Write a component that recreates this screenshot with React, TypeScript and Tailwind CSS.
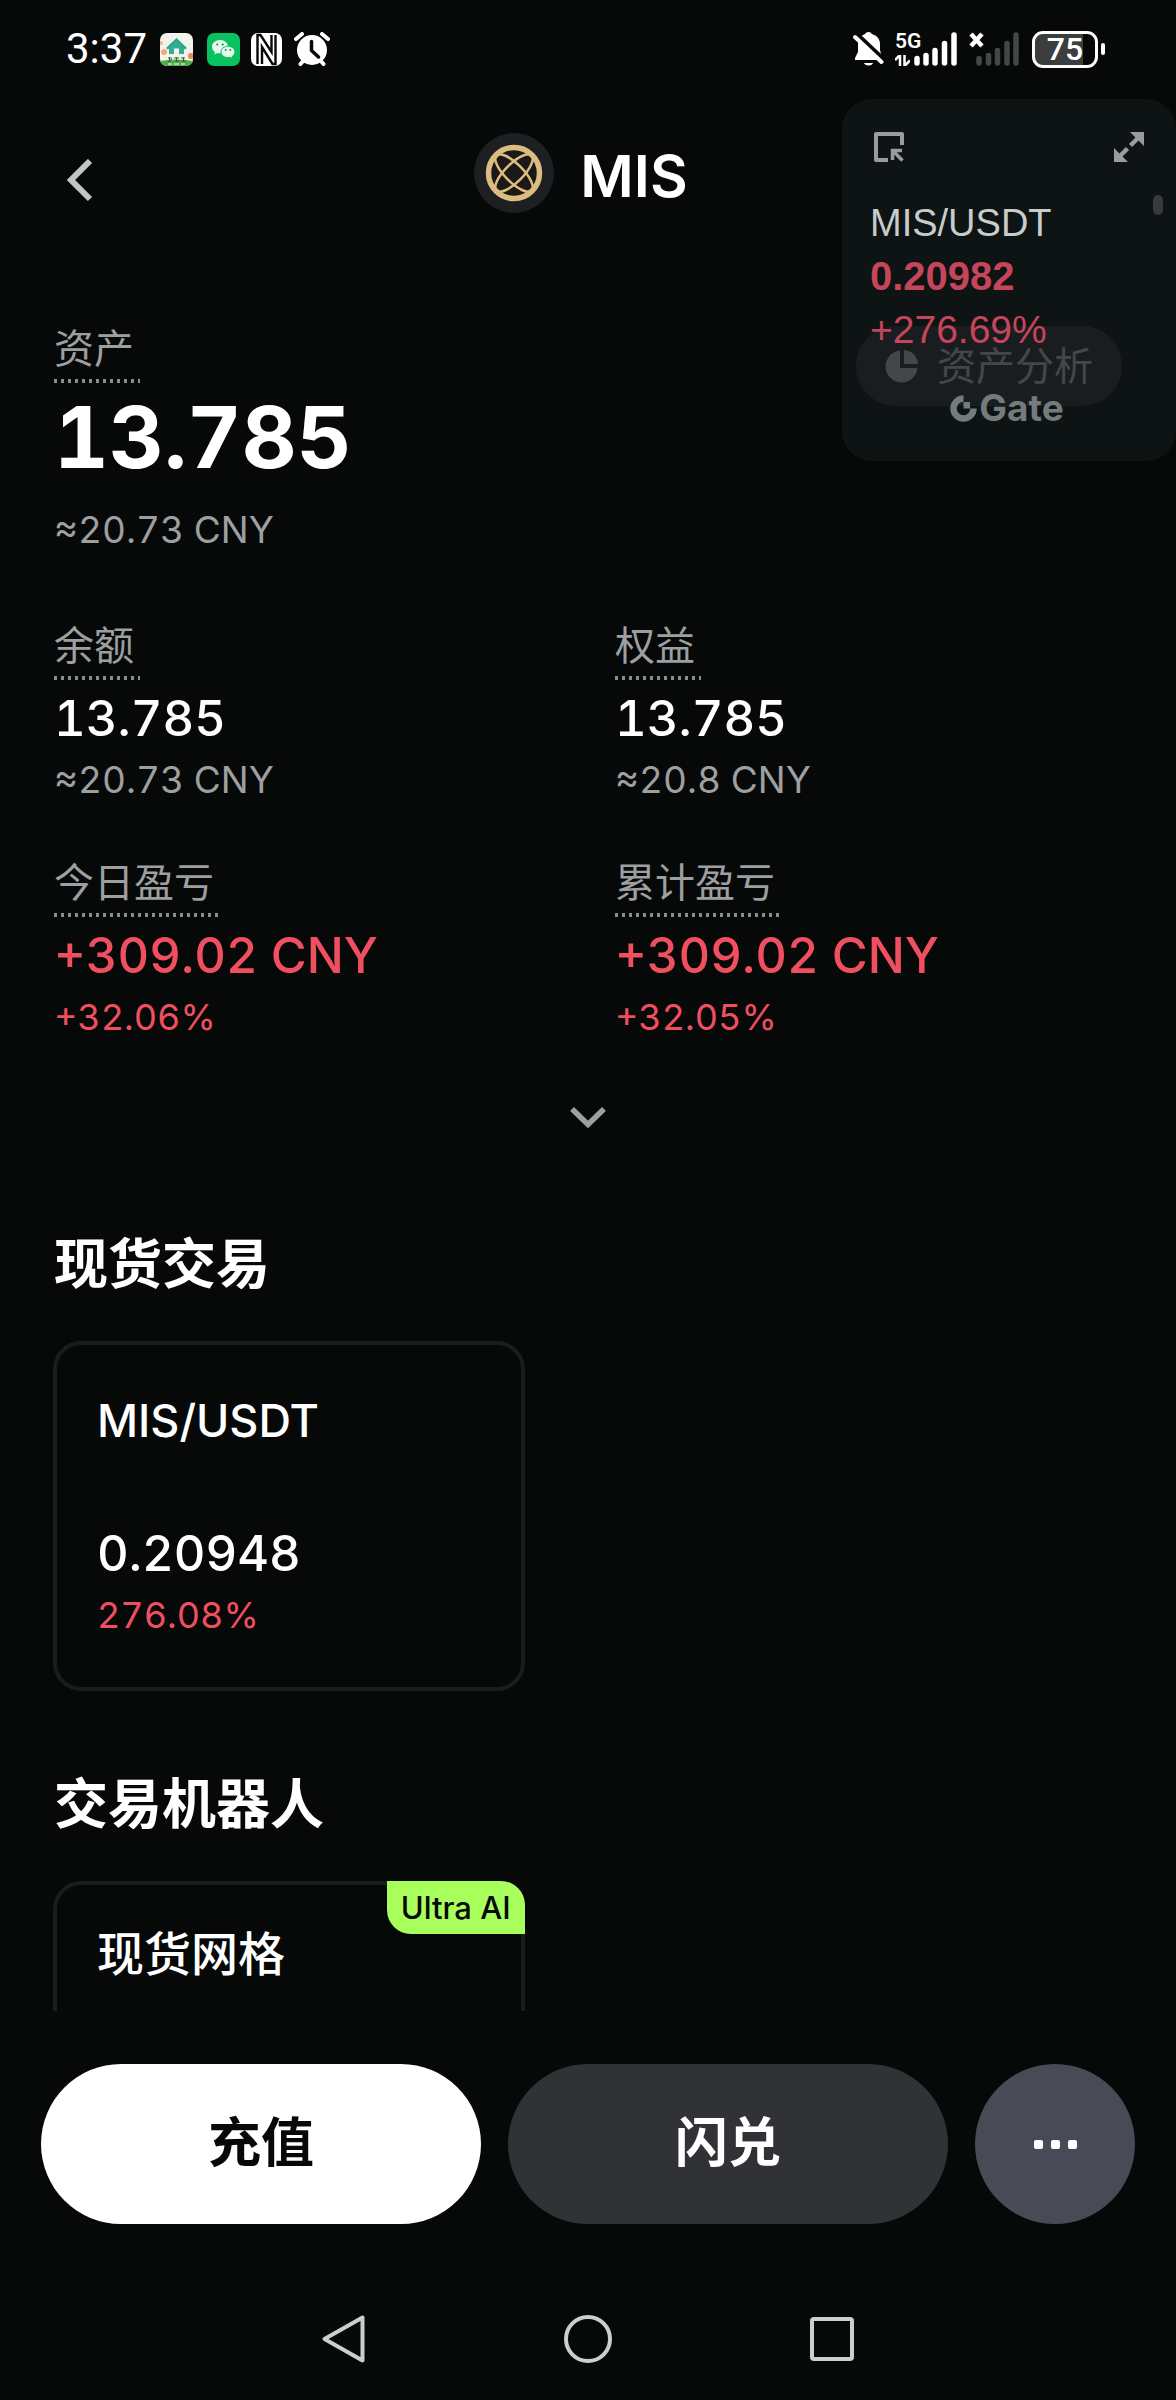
import React from "react";

const RED = "text-[#f04f60]";

function StatusBar() {
  return (
    <div className="flex h-[98px] shrink-0 items-center justify-between pl-[66px] pr-[71px] font-['Roboto',sans-serif] text-white">
      <div className="flex items-center">
        <span className="text-[42px] leading-[50px]">3:37</span>
        <svg className="ml-[13px] h-[33px] w-[33px]" viewBox="0 0 33 33" aria-hidden="true">
          <defs>
            <clipPath id="home-clip">
              <rect width="33" height="33" rx="7" />
            </clipPath>
          </defs>
          <g clipPath="url(#home-clip)">
            <rect width="33" height="33" fill="#f2f4ec" />
            <circle cx="4" cy="19" r="3" fill="#f3a878" />
            <circle cx="1" cy="10" r="2" fill="#f6b48a" />
            <circle cx="31" cy="23" r="3" fill="#f08a4b" />
            <path d="M0 28Q16 25 33 28V33H0Z" fill="#4fae4a" />
            <path d="M6 15L16.500 5L27 15L25 16.500L16.500 9L8 16.500Z" fill="#2ba58a" />
            <path d="M9 15L16.500 8L24 15V21H19V15.500H14V21H9Z" fill="#35ab92" />
            <path d="M8 25h4M9.500 24v5M8 29l4-3M14 25h5M15 28h4M16.500 24v5M21 25h4M22 28h4M23.500 24v5" stroke="#2f6b3c" strokeWidth="1" fill="none" />
            <path d="M8 31h4M14 31h5M21 31h4" stroke="#fff" strokeWidth="1" />
          </g>
        </svg>
        <svg className="ml-[14px] h-[33px] w-[33px]" viewBox="0 0 33 33" aria-hidden="true">
          <rect width="33" height="33" rx="7" fill="#07c25f" />
          <path d="M13 7C8.500 7 5 10 5 13.700c0 2.100 1.100 3.900 2.900 5.200L7.300 21.500l3-1.600c.9.200 1.800.4 2.700.4 4.500 0 8-2.900 8-6.600S17.500 7 13 7Z" fill="#e9f7ec" />
          <path d="M21 13.200c-3.900 0-7 2.500-7 5.700s3.100 5.700 7 5.700c.8 0 1.600-.1 2.300-.3l2.500 1.300-.6-2.200c1.700-1.100 2.700-2.700 2.700-4.500 0-3.200-3.100-5.700-6.900-5.700Z" fill="#e9f7ec" stroke="#07c25f" strokeWidth="1" />
          <g fill="#07a04f">
            <circle cx="10.300" cy="11.500" r="1.100" />
            <circle cx="15.800" cy="11.500" r="1.100" />
            <circle cx="18.700" cy="17" r="1" />
            <circle cx="23.300" cy="17" r="1" />
          </g>
        </svg>
        <svg className="ml-[11px] h-[33px] w-[31px]" viewBox="0 0 31 33" aria-hidden="true">
          <rect width="31" height="33" rx="7" fill="#fff" />
          <g fill="none" stroke="#060908" strokeWidth="2.400">
            <path d="M6.500 31V2H9.500L20.500 19V2" />
            <path d="M24.500 2V31H21.500L11 14V31" />
          </g>
        </svg>
        <svg className="ml-[12px] h-[34px] w-[36px]" viewBox="0 0 36 34" aria-hidden="true">
          <circle cx="18" cy="18" r="15" fill="#fff" />
          <path d="M2 7L8 2M34 7L28 2M6.500 32L10 28M29.500 32L26 28" stroke="#fff" strokeWidth="4" strokeLinecap="round" />
          <path d="M17.500 9.500V18.500L24.500 25" fill="none" stroke="#060908" strokeWidth="3.500" strokeLinecap="round" />
        </svg>
      </div>
      <div className="flex items-center">
        <svg className="h-[34px] w-[31px]" viewBox="0 0 31 34" aria-hidden="true">
          <path d="M15.500 0a4 4 0 0 1 3.500 2c5 1.500 8 5 8 10v6l2 8v2H2v-2l3-6v-8C5 7 8 3.500 12 2a4 4 0 0 1 3.500-2Z" fill="#fff" />
          <path d="M11 31h9a4.600 3 0 0 1-9 0Z" fill="#fff" />
          <path d="M4 2L32 28.500" stroke="#060908" strokeWidth="4" />
          <path d="M2 5L28.500 30" stroke="#fff" strokeWidth="4" strokeLinecap="round" />
        </svg>
        <div className="ml-[11px] flex h-[34px] items-end">
          <div className="flex h-full w-[18px] flex-col justify-between">
            <span className="text-[21px] font-semibold leading-[18px]">5G</span>
            <svg className="h-[11px] w-[15px]" viewBox="0 0 15 11" aria-hidden="true">
              <path d="M0 5L5 0V11M9.500 0V11L15 5.500" fill="none" stroke="#fff" strokeWidth="2.500" />
            </svg>
          </div>
          <svg className="h-[34px] w-[44px]" viewBox="0 0 44 34" aria-hidden="true">
            <path d="M4 26.500V31M13 23.500V31M22 18.500V31M31.500 11.500V31M41 3V31" stroke="#fff" strokeWidth="5.500" strokeLinecap="round" />
          </svg>
        </div>
        <svg className="ml-[12px] h-[34px] w-[51px]" viewBox="0 0 51 34" aria-hidden="true">
          <path d="M2 2L13 14M13 2L2 14" stroke="#fff" strokeWidth="4.500" />
          <path d="M10 26.500V31M19.500 23.500V31M28.500 18.500V31M38 11.500V31M47 3V31" stroke="#454747" strokeWidth="5.500" strokeLinecap="round" />
        </svg>
        <div className="ml-[12px] flex items-center gap-[3px]">
          <div className="flex h-[37px] w-[66px] items-center justify-center rounded-[11px] border-[3px] border-white bg-[linear-gradient(90deg,#3c3d3d_80%,#060908_80%)] text-[32px] font-medium leading-[32px]">
            75
          </div>
          <div className="h-[12px] w-[4px] rounded-full bg-white" />
        </div>
      </div>
    </div>
  );
}

function CoinLogo() {
  return (
    <svg className="h-[80px] w-[80px]" viewBox="0 0 80 80" aria-hidden="true">
      <circle cx="40" cy="40" r="40" fill="#1e1f23" />
      <g fill="none" stroke="#dcbc7f">
        <circle cx="40" cy="40" r="25.500" strokeWidth="5.500" fill="#1b1818" />
        <ellipse cx="40" cy="40" rx="25" ry="9" strokeWidth="2.500" transform="rotate(45 40 40)" />
        <ellipse cx="40" cy="40" rx="25" ry="9" strokeWidth="2.500" transform="rotate(-45 40 40)" />
      </g>
    </svg>
  );
}

function Header() {
  return (
    <header className="grid h-[150px] shrink-0 grid-cols-[1fr_auto_1fr] items-center">
      <button aria-label="返回" className="ml-[53px] flex h-[64px] w-[53px] items-end justify-center">
        <svg className="h-[46px] w-[30px]" viewBox="0 0 30 46" aria-hidden="true">
          <path d="M25 2L6 21L25 40" fill="none" stroke="#c4c6c6" strokeWidth="6" />
        </svg>
      </button>
      <div className="flex items-center gap-[26px] pr-[14px]">
        <CoinLogo />
        <h1 className="pt-[5px] text-[58px] font-semibold leading-[64px] text-white">MIS</h1>
      </div>
    </header>
  );
}

function Label({ children }: { children: React.ReactNode }) {
  return (
    <div className="w-fit">
      <div className="text-[40px] leading-[60px] text-[#9d9fa0]">{children}</div>
      <div className="-mr-[6px] h-[4px] bg-[repeating-linear-gradient(90deg,#8b8d8d_0_3px,transparent_3px_7px)]" />
    </div>
  );
}

type StatProps = { label: string; value: string; sub: string; loss?: boolean };

function Stat({ label, value, sub, loss }: StatProps) {
  return (
    <div>
      <Label>{label}</Label>
      <div className={`mt-[9px] text-[49px] font-medium leading-[60px] ${loss ? RED : "text-white"}`}>{value}</div>
      <div className={`mt-[3px] leading-[56px] ${loss ? "text-[36px] text-[#f04f60]" : "text-[37px] text-[#9d9fa0]"}`}>{sub}</div>
    </div>
  );
}

function GateMark() {
  return (
    <div className="flex items-center justify-center gap-[2px] text-[#747b7d]">
      <svg className="h-[27px] w-[27px]" viewBox="0 0 27 27" aria-hidden="true">
        <path d="M13.500 3.500A10 10 0 1 0 23.500 13.500" fill="none" stroke="currentColor" strokeWidth="6.500" />
        <rect x="13.500" y="7" width="6.500" height="6.500" fill="currentColor" />
      </svg>
      <span className="text-[37px] font-bold leading-[44px]">Gate</span>
    </div>
  );
}

function FloatingTicker() {
  return (
    <aside className="absolute right-0 top-[99px] w-[334px] rounded-[30px] bg-[#131819]/70 pb-[31px] pl-[28px] pr-[32px] pt-[33px] font-['Liberation_Sans',sans-serif]">
      <div className="flex items-center justify-between pl-[4px]">
        <button aria-label="缩小">
          <svg className="h-[30px] w-[30px]" viewBox="0 0 30 30" aria-hidden="true">
            <path d="M14 28H2V2H28V13" fill="none" stroke="#989c9d" strokeWidth="4" strokeLinejoin="round" />
            <path d="M18.500 28V18.500H28M19 19L28.500 28.500" fill="none" stroke="#989c9d" strokeWidth="3.500" />
          </svg>
        </button>
        <button aria-label="展开">
          <svg className="h-[30px] w-[30px]" viewBox="0 0 30 30" aria-hidden="true">
            <path d="M16 0H30V14ZM0 16V30H14Z" fill="#989c9d" />
            <path d="M16.500 13.500L25 5M13.500 16.500L5 25" stroke="#989c9d" strokeWidth="4.500" />
          </svg>
        </button>
      </div>
      <div className="mt-[35px] text-[38px] leading-[53px]">
        <div className="text-[#c8cccc]">MIS/USDT</div>
        <div className="text-[40px] font-bold text-[#c5455a]">0.20982</div>
        <div className="text-[39px] text-[#c5455a]">+276.69%</div>
      </div>
      <div className="mt-[30px] font-['Inter',sans-serif]">
        <GateMark />
      </div>
      <div className="absolute right-[13px] top-[96px] h-[20px] w-[10px] rounded-full bg-[#37393e]" />
    </aside>
  );
}

function Assets() {
  return (
    <section className="pl-[1px] pt-[71px]">
      <div className="flex items-start justify-between">
        <div>
          <Label>资产</Label>
          <div className="mt-[3px] text-[85px] font-bold leading-[104px] text-white">13.785</div>
          <div className="mt-[12px] text-[37px] leading-[56px] text-[#9d9fa0]">≈20.73 CNY</div>
        </div>
        <button className="mr-[54px] mt-[7px] flex h-[80px] items-center gap-[18px] rounded-full bg-[#2e2a2c] px-[29px] text-[39px] text-[#b4b4b4]">
          <svg className="h-[34px] w-[34px]" viewBox="0 0 34 34" aria-hidden="true">
            <path d="M15 1.500A16 16 0 1 0 32.500 19H15Z" fill="currentColor" />
            <path d="M19 1A15 15 0 0 1 33 15H19Z" fill="currentColor" />
          </svg>
          资产分析
        </button>
      </div>
      <div className="mt-[58px] grid grid-cols-2 gap-y-[45px]">
        <Stat label="余额" value="13.785" sub="≈20.73 CNY" />
        <Stat label="权益" value="13.785" sub="≈20.8 CNY" />
        <Stat label="今日盈亏" value="+309.02 CNY" sub="+32.06%" loss />
        <Stat label="累计盈亏" value="+309.02 CNY" sub="+32.05%" loss />
      </div>
      <div className="mt-[44px] flex justify-center pr-[54px]">
        <button aria-label="展开更多" className="flex h-[56px] w-[56px] items-center justify-center">
          <svg className="h-[24px] w-[40px]" viewBox="0 0 40 24" aria-hidden="true">
            <path d="M4 4L20 19.500L36 4" fill="none" stroke="#9d9fa0" strokeWidth="5.500" />
          </svg>
        </button>
      </div>
    </section>
  );
}

function SectionTitle({ children }: { children: React.ReactNode }) {
  return <h2 className="pl-[1px] text-[54px] font-semibold leading-[72px] text-white">{children}</h2>;
}

function BottomBar() {
  return (
    <footer className="shrink-0">
      <div className="flex gap-[27px] px-[41px] pt-[53px]">
        <button className="h-[160px] flex-1 rounded-full bg-white text-[53px] font-semibold text-[#060908]">充值</button>
        <button className="h-[160px] flex-1 rounded-full bg-[#313235] text-[53px] font-semibold text-white">闪兑</button>
        <button aria-label="更多" className="flex h-[160px] w-[160px] items-center justify-center gap-[8px] rounded-full bg-[#484b55]">
          <span className="h-[9px] w-[9px] rounded-[2px] bg-white" />
          <span className="h-[9px] w-[9px] rounded-[2px] bg-white" />
          <span className="h-[9px] w-[9px] rounded-[2px] bg-white" />
        </button>
      </div>
      <nav className="flex h-[176px] items-center justify-center gap-[195px] pt-[54px]">
        <button aria-label="后退">
          <svg className="h-[50px] w-[48px]" viewBox="0 0 48 50" aria-hidden="true">
            <path d="M42.500 3.500V46.500L4.500 25Z" fill="none" stroke="#cdcfcf" strokeWidth="4" strokeLinejoin="round" />
          </svg>
        </button>
        <button aria-label="主屏幕">
          <svg className="h-[50px] w-[50px]" viewBox="0 0 50 50" aria-hidden="true">
            <circle cx="25" cy="25" r="22" fill="none" stroke="#cdcfcf" strokeWidth="4" />
          </svg>
        </button>
        <button aria-label="最近任务">
          <svg className="h-[50px] w-[48px]" viewBox="0 0 48 50" aria-hidden="true">
            <rect x="4" y="5" width="40" height="40" rx="2" fill="none" stroke="#cdcfcf" strokeWidth="4" />
          </svg>
        </button>
      </nav>
    </footer>
  );
}

export default function App() {
  return (
    <div className="relative flex h-screen flex-col overflow-hidden bg-[#060908] font-['Inter','Noto_Sans_CJK_SC',sans-serif] tabular-nums" lang="zh-CN">
      <StatusBar />
      <Header />
      <main className="min-h-0 flex-1 overflow-hidden pl-[53px]">
        <Assets />
        <section className="mt-[84px]">
          <SectionTitle>现货交易</SectionTitle>
          <article className="mt-[40px] w-[42%] rounded-[28px] border-4 border-[#1b1d1d] px-[40px] pb-[44px] pt-[46px]">
            <h3 className="text-[45px] font-medium leading-[60px] text-white">MIS/USDT</h3>
            <div className="mt-[73px] text-[49px] font-medium leading-[60px] text-white">0.20948</div>
            <div className={`mt-[3px] text-[36px] leading-[56px] ${RED}`}>276.08%</div>
          </article>
        </section>
        <section className="mt-[78px]">
          <SectionTitle>交易机器人</SectionTitle>
          <article className="relative mt-[40px] w-[42%] rounded-[28px] border-4 border-[#1b1d1d] px-[40px] pb-[45px] pt-[39px]">
            <h3 className="text-[47px] font-medium leading-[60px] text-white">现货网格</h3>
            <span className="absolute -right-[4px] -top-[4px] rounded-bl-[24px] rounded-tr-[24px] bg-[#a8ff5b] px-[14px] text-[31px] font-medium leading-[53px] text-[#060908]">
              Ultra AI
            </span>
            <div className="h-[200px]" />
          </article>
        </section>
      </main>
      <BottomBar />
      <FloatingTicker />
    </div>
  );
}
